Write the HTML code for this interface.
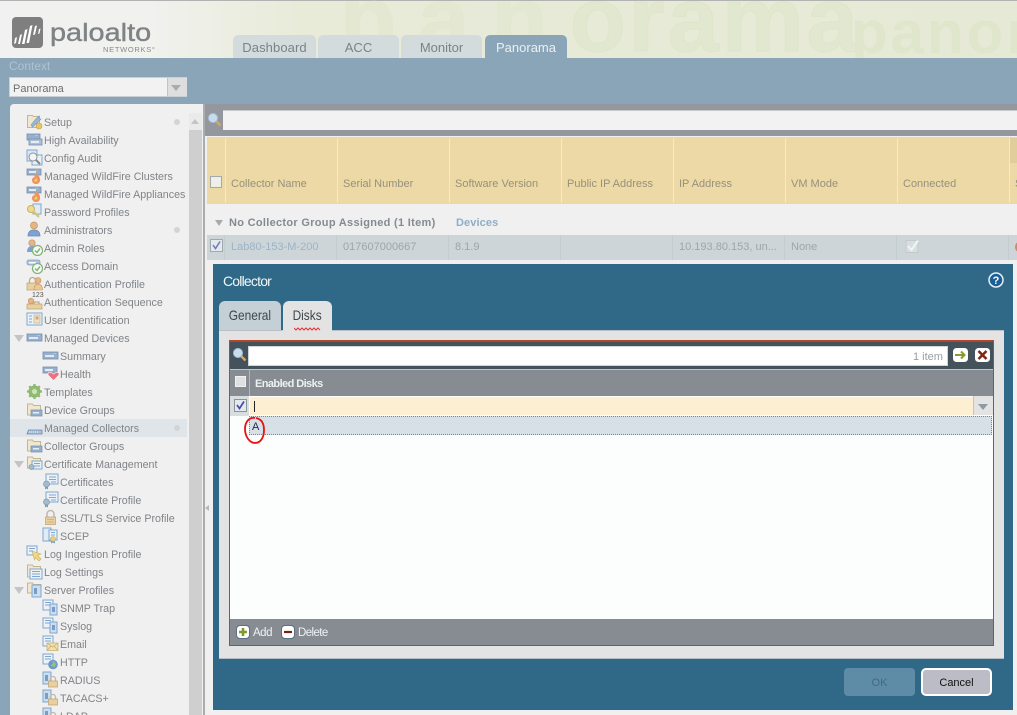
<!DOCTYPE html>
<html style="overflow:hidden;width:1017px;height:715px"><head><meta charset="utf-8"><title>Panorama</title>
<style>
html,body{margin:0;padding:0}
body{width:1017px;height:715px;overflow:hidden;position:relative;background:#f0f0f0;font-family:"Liberation Sans",sans-serif;font-size:11px}
#w{position:absolute;left:0;top:0;width:1017px;height:715px;overflow:hidden}
.a{position:absolute}
.t{position:absolute;white-space:nowrap;line-height:14px}
.tab{position:absolute;top:35px;height:23px;border-radius:5px 5px 0 0;background:#d3dbdc;color:#7d8285;font-size:13px;line-height:26px;text-align:center}
.s{position:absolute;left:44px;margin-top:1px;white-space:nowrap;color:#808488;font-size:10.7px;line-height:14px}
.l2{left:60px}
.i{position:absolute;width:17px;height:17px;left:26px;opacity:.68}
.i2{left:42px}
.tri{position:absolute;left:14px;width:0;height:0;border-left:5px solid transparent;border-right:5px solid transparent;border-top:7px solid #c4c4c4}
.dot{position:absolute;left:174px;width:6px;height:6px;border-radius:50%;background:#d4d4d4}
.h{position:absolute;top:178px;color:#96917d;font-size:11px;line-height:13px;white-space:nowrap}
.hs{position:absolute;top:138px;width:1px;height:65px;background:#f6e9c8}
.r{position:absolute;top:241px;color:#a0a5a7;font-size:11px;line-height:13px;white-space:nowrap}
.rs{position:absolute;top:236px;width:1px;height:24px;background:#c3cdd0}
.cx{display:inline-block;transform:scaleX(.85)}
</style></head>
<body><div id="w">
<svg width="0" height="0" style="position:absolute">
<defs>
<symbol id="dev" viewBox="0 0 17 17"><rect x="1" y="5" width="15" height="7" fill="#6d92bd" stroke="#3c5f8c" stroke-width=".8"/><rect x="3" y="8" width="9" height="2" fill="#dce7f3"/><rect x="11" y="6" width="3" height="1" fill="#7cd04e"/></symbol>
<symbol id="ha" viewBox="0 0 17 17"><rect x="1" y="3" width="13" height="6" fill="#6d92bd" stroke="#3c5f8c" stroke-width=".8"/><rect x="3" y="8" width="13" height="6" fill="#8aaad0" stroke="#3c5f8c" stroke-width=".8"/><rect x="5" y="10" width="8" height="2" fill="#e2ebf5"/><rect x="9" y="4" width="3" height="1" fill="#7cd04e"/></symbol>
<symbol id="setup" viewBox="0 0 17 17"><path d="M1.500 2.500h5l1 1h6v11h-12z" fill="#f2e4c0" stroke="#b59a5e"/><path d="M13 3 9 7 5 12l1.500 2L12 9l3-3-1 0-1-1z" fill="#6d9fd0" stroke="#3f6d9c" stroke-width=".6"/><circle cx="13" cy="13" r="3" fill="#e8b020" stroke="#a87a10" stroke-width=".6"/></symbol>
<symbol id="audit" viewBox="0 0 17 17"><rect x="1" y="1" width="10" height="11" fill="#cfe2f5" stroke="#4a86c0"/><rect x="6" y="6" width="10" height="10" fill="#e6f0fa" stroke="#4a86c0"/><circle cx="7" cy="8" r="4" fill="#f4f8fc" stroke="#666"/><path d="M10 11l4 4" stroke="#555" stroke-width="2"/></symbol>
<symbol id="wf" viewBox="0 0 17 17"><rect x="1" y="2" width="14" height="6" fill="#6d92bd" stroke="#3c5f8c" stroke-width=".8"/><rect x="3" y="4" width="7" height="2" fill="#e2ebf5"/><rect x="9" y="2.500" width="3" height="1" fill="#7cd04e"/><path d="M10 6c1 2 4 3 4 6a4 4 0 0 1-8 2c-.500-2 1-3 1.500-4 .5 1 1 1 1-.5 0-1.500.500-2.500 1.500-3.500z" fill="#ef6a1f"/><path d="M10 11c1 1 1.500 2 1 3.500H8.500C8 13 9.500 12.500 10 11z" fill="#f8c42a"/></symbol>
<symbol id="key" viewBox="0 0 17 17"><rect x="7" y="1" width="8" height="10" fill="#dbe9f7" stroke="#4a86c0"/><circle cx="5" cy="6" r="3.500" fill="#f0d060" stroke="#b8941e"/><path d="M7 8l6 6" stroke="#d8b030" stroke-width="2.400"/></symbol>
<symbol id="admin" viewBox="0 0 17 17"><circle cx="8" cy="4.500" r="3.500" fill="#e09a50" stroke="#a86a2c" stroke-width=".7"/><path d="M2 15c0-4 2-6 6-6s6 2 6 6z" fill="#4a7ec4" stroke="#2f5a94" stroke-width=".7"/></symbol>
<symbol id="roles" viewBox="0 0 17 17"><circle cx="6" cy="4" r="3.200" fill="#e09a50" stroke="#a86a2c" stroke-width=".7"/><path d="M1 13c0-4 2-6 5-6s5 2 5 6z" fill="#4a7ec4"/><circle cx="11.500" cy="11.500" r="5" fill="#fff" stroke="#4d9a3a" stroke-width="1.300"/><path d="M9 11.500l2 2 3-4" stroke="#4d9a3a" stroke-width="1.500" fill="none"/></symbol>
<symbol id="dom" viewBox="0 0 17 17"><rect x="1" y="3" width="13" height="5" rx="2" fill="#8fb4d8" stroke="#4a7ba8" stroke-width=".8"/><rect x="3" y="5" width="7" height="1.500" fill="#fff"/><circle cx="11.500" cy="11.500" r="5" fill="#fff" stroke="#4d9a3a" stroke-width="1.300"/><path d="M9 11.500l2 2 3-4" stroke="#4d9a3a" stroke-width="1.500" fill="none"/></symbol>
<symbol id="authp" viewBox="0 0 17 17"><path d="M3.500 8V5.500a3 3 0 0 1 6 0V8" fill="none" stroke="#b08a4a" stroke-width="1.300"/><rect x="1" y="8" width="10" height="7" fill="#e8c27a" stroke="#a07a3a" stroke-width=".7"/><circle cx="12" cy="5.500" r="3" fill="#e09a50" stroke="#a86a2c" stroke-width=".6"/><path d="M8 15c0-4 1.500-6 4-6s4.500 2 4.500 6z" fill="#eeb36c" stroke="#a86a2c" stroke-width=".6"/></symbol>
<symbol id="auths" viewBox="0 0 17 17"><circle cx="5" cy="8" r="2.800" fill="#e09a50" stroke="#a86a2c" stroke-width=".6"/><rect x="1" y="11" width="15" height="5" fill="#e8c27a" stroke="#a07a3a" stroke-width=".7"/><path d="M8 11V9h5v2" fill="none" stroke="#a07a3a"/></symbol>
<symbol id="uid" viewBox="0 0 17 17"><rect x="1" y="2" width="15" height="12" fill="#eef4fa" stroke="#4a86c0"/><path d="M3 5h3M3 8h3M3 11h3" stroke="#4a86c0"/><rect x="8" y="4" width="6" height="8" fill="#f0d9b0" stroke="#a08860" stroke-width=".6"/><circle cx="11" cy="7" r="1.700" fill="#c88a50"/></symbol>
<symbol id="health" viewBox="0 0 17 17"><rect x="1" y="2" width="14" height="6" fill="#6d92bd" stroke="#3c5f8c" stroke-width=".8"/><rect x="3" y="4" width="8" height="2" fill="#e2ebf5"/><path d="M11.500 15.500 6.500 10.500c-1.500-2 .5-4 2.500-3l2.500 1.500 2.500-1.500c2-1 4 1 2.500 3z" fill="#e8384e" stroke="#fff" stroke-width=".6"/></symbol>
<symbol id="tpl" viewBox="0 0 17 17"><circle cx="8.500" cy="8.500" r="5.500" fill="#7cb84c" stroke="#4e8a2a"/><path d="M8.500 1v15M1 8.500h15M3.200 3.200l10.600 10.600M13.800 3.200 3.200 13.800" stroke="#5f9e36" stroke-width="2.200"/><circle cx="8.500" cy="8.500" r="2.600" fill="#b9e08e"/></symbol>
<symbol id="fold" viewBox="0 0 17 17"><path d="M1.500 3h5l1 1.500h7V14h-13z" fill="#f2e4c0" stroke="#b59a5e"/><rect x="5" y="9" width="11" height="6" fill="#6d92bd" stroke="#3c5f8c" stroke-width=".7"/><rect x="7" y="11" width="6" height="1.500" fill="#e2ebf5"/></symbol>
<symbol id="coll" viewBox="0 0 17 17"><path d="M1 15 2.500 11H15l1 0v4z" fill="#8fb0d4" stroke="#3c5f8c" stroke-width=".8"/><path d="M3 13h10" stroke="#e2ebf5" stroke-dasharray="1 1" stroke-width="1.300"/></symbol>
<symbol id="cfold" viewBox="0 0 17 17"><path d="M1.500 2h5l1 1.500h7V13h-13z" fill="#f2e4c0" stroke="#b59a5e"/><rect x="6" y="6" width="10" height="8" fill="#e6f0fa" stroke="#4a86c0"/><path d="M8 8.500h6M8 11h6" stroke="#4a86c0"/><circle cx="5.500" cy="12" r="2.500" fill="#7fa3c0" stroke="#4a7390" stroke-width=".7"/></symbol>
<symbol id="cert" viewBox="0 0 17 17"><rect x="4" y="1" width="12" height="10" fill="#eaf2fa" stroke="#4a86c0"/><path d="M7 4h7M7 6.500h7M9 9h5" stroke="#4a86c0"/><circle cx="4.500" cy="11" r="3" fill="#7fa3c0" stroke="#4a7390" stroke-width=".7"/><path d="M3 13.500v3l1.500-1 1.500 1v-3" fill="#4a7390"/></symbol>
<symbol id="lock" viewBox="0 0 17 17"><path d="M5 8V5a3.500 3.500 0 0 1 7 0v3" fill="none" stroke="#a8a090" stroke-width="1.500"/><rect x="3.500" y="8" width="10" height="7.500" fill="#e8c27a" stroke="#a07a3a" stroke-width=".7"/><path d="M5 10.500h7M5 13h7" stroke="#c09a50"/></symbol>
<symbol id="scep" viewBox="0 0 17 17"><rect x="1" y="1" width="8" height="13" fill="#dbe9f7" stroke="#4a86c0"/><rect x="7" y="3" width="8" height="10" fill="#eef4fa" stroke="#4a86c0"/><path d="M9 5.500h4M9 8h4" stroke="#4a86c0"/><circle cx="11" cy="12" r="2.500" fill="#e8c040" stroke="#a88a20" stroke-width=".6"/><path d="M9 14.500v2l2-1 2 1v-2" fill="#3f78b8"/></symbol>
<symbol id="logi" viewBox="0 0 17 17"><rect x="1" y="1" width="10" height="9" fill="#eef4fa" stroke="#4a86c0"/><path d="M3 3.500h6M3 6h4" stroke="#4a86c0"/><path d="M6 6l9 3-3.500 1.500 3.500 3.500-2 2-3.500-3.500L8.500 15z" fill="#f0cc50" stroke="#b0901f" stroke-width=".6"/></symbol>
<symbol id="logs" viewBox="0 0 17 17"><path d="M1.500 2h5l1 1.500h7V14h-13z" fill="#f2e4c0" stroke="#b59a5e"/><rect x="4" y="6" width="12" height="10" fill="#eef4fa" stroke="#4a86c0"/><path d="M6 8.500h8M6 11h8M6 13.500h8" stroke="#4a86c0"/></symbol>
<symbol id="srvf" viewBox="0 0 17 17"><path d="M1.500 2h5l1 1.500h7V12h-13z" fill="#f2e4c0" stroke="#b59a5e"/><rect x="6" y="4" width="9" height="12" fill="#bcd5ec" stroke="#4a86c0"/><rect x="8" y="7" width="3" height="6" fill="#3f78b8"/></symbol>
<symbol id="srv" viewBox="0 0 17 17"><rect x="1" y="1" width="10" height="10" fill="#eef4fa" stroke="#4a86c0"/><path d="M3 3.500h6M3 6h6" stroke="#4a86c0"/><rect x="8" y="5" width="7" height="11" fill="#bcd5ec" stroke="#4a86c0"/><rect x="10" y="8" width="3" height="5" fill="#3f78b8"/></symbol>
<symbol id="mail" viewBox="0 0 17 17"><rect x="1" y="1" width="10" height="10" fill="#eef4fa" stroke="#4a86c0"/><path d="M3 3.500h6M3 6h6" stroke="#4a86c0"/><rect x="5" y="8" width="11" height="7.500" fill="#f2d890" stroke="#b0902f" stroke-width=".7"/><path d="M5 8l5.500 4L16 8M5 15.500l4-4.500M16 15.500l-4-4.500" stroke="#b0902f" stroke-width=".7" fill="none"/></symbol>
<symbol id="web" viewBox="0 0 17 17"><rect x="1" y="1" width="10" height="10" fill="#eef4fa" stroke="#4a86c0"/><path d="M3 3.500h6M3 6h6" stroke="#4a86c0"/><circle cx="11" cy="11.500" r="4.800" fill="#2f6fc0"/><path d="M8 9c2-1 3 0 3 1s-2 1-2 3l3 1c1-1 2-2 2-3-1-1-2-2-1-3" fill="#62b03c"/></symbol>
<symbol id="rad" viewBox="0 0 17 17"><rect x="1" y="1" width="8" height="12" fill="#bcd5ec" stroke="#4a86c0"/><rect x="3" y="4" width="3" height="6" fill="#3f78b8"/><path d="M8.500 10V8a2.500 2.500 0 0 1 5 0v2" fill="none" stroke="#a8a090" stroke-width="1.300"/><rect x="6.500" y="10" width="9" height="6" fill="#e8c27a" stroke="#a07a3a" stroke-width=".7"/></symbol>
</defs>
</svg>

<!-- header -->
<div class="a" style="left:0;top:0;width:1017px;height:58px;overflow:hidden;background:linear-gradient(90deg,#f1f1f1 0,#f1f1ee 150px,#e8ebd8 300px,#e5e9d6 1017px)">
 <div class="a" style="left:0;top:0;width:1017px;height:1px;background:#b2b2b2"></div>
 <div class="t" style="left:340px;top:-26px;font-size:92px;line-height:92px;font-weight:bold;color:#e2e7cf;letter-spacing:3px;-webkit-text-stroke:1px #dfe6c8"><span style="letter-spacing:22px;opacity:.6">pan</span>orama</div>
 <div class="t" style="left:851px;top:3px;font-size:60px;line-height:60px;font-weight:bold;color:#e0e6cc;letter-spacing:3px">panor</div>
</div>
<svg class="a" style="left:12px;top:17px" width="31" height="31" viewBox="0 0 31 31"><rect width="31" height="31" rx="4" fill="#7f7f7f"/><path d="M3 21l2-1-1 6-2 1zM8 18l2-1-2 10h-2zM13 13l2.500-1-3 15h-2.500zM18 9l2.500-1-3.500 18h-2.500zM23 9l2-.500-2 9-2 .5zM27 12l1.500-.500-1 5-1.500.500z" fill="#fff"/></svg>
<div class="t" style="left:50px;top:19px;font-size:25px;line-height:28px;color:#7f8386;transform:scaleX(1.155);transform-origin:0 0;-webkit-text-stroke:.4px #7f8386">paloalto</div>
<div class="t" style="left:103px;top:45px;font-size:7.500px;line-height:10px;color:#8a8a8a;letter-spacing:.7px">NETWORKS°</div>
<div class="tab" style="left:233px;width:83px;letter-spacing:.1px">Dashboard</div>
<div class="tab" style="left:318px;width:81px;">ACC</div>
<div class="tab" style="left:401px;width:81px;">Monitor</div>
<div class="tab" style="left:485px;width:82px;background:#8aa5b8;color:#eaf0f4">Panorama</div>

<!-- blue band -->
<div class="a" style="left:0;top:58px;width:1017px;height:657px;background:#8aa5b8"></div>
<div class="t" style="left:9px;top:59px;color:#aec3d0;font-size:12px">Context</div>
<div class="a" style="left:9px;top:77px;width:176px;height:18px;background:#f2f2f2;border:1px solid #c9cfd3"></div>
<div class="t" style="left:13px;top:82px;color:#6d6d6d;font-size:11px">Panorama</div>
<div class="a" style="left:167px;top:78px;width:19px;height:18px;background:#dedede;border-left:1px solid #c4c4c4"></div>
<div class="a" style="left:171px;top:85px;width:0;height:0;border-left:5px solid transparent;border-right:5px solid transparent;border-top:6px solid #a6adb2"></div>

<!-- sidebar -->
<div class="a" style="left:10px;top:104px;width:194px;height:611px;background:#f0f0f0;border-radius:4px 0 0 0"></div>
<div class="a" style="left:189px;top:113px;width:13px;height:602px;background:#cfcfcf"></div>
<div class="a" style="left:189px;top:113px;width:13px;height:17px;background:#eaeaea"></div>
<div class="a" style="left:191px;top:119px;width:0;height:0;border-left:4px solid transparent;border-right:4px solid transparent;border-bottom:5px solid #c4c4c4"></div>
<div class="a" style="left:10px;top:419px;width:177px;height:18px;background:#dfe5e9"></div>
<div class="a" style="left:203px;top:104px;width:2px;height:611px;background:#a9adb0"></div>
<div class="a" style="left:205px;top:104px;width:812px;height:611px;background:#f0f0f0"></div>

<svg class="i" style="top:113px"><use href="#setup"/></svg><div class="s" style="top:115px">Setup</div><div class="dot" style="top:119px"></div>
<svg class="i" style="top:131px"><use href="#ha"/></svg><div class="s" style="top:133px">High Availability</div>
<svg class="i" style="top:149px"><use href="#audit"/></svg><div class="s" style="top:151px">Config Audit</div>
<svg class="i" style="top:167px"><use href="#wf"/></svg><div class="s" style="top:169px">Managed WildFire Clusters</div>
<svg class="i" style="top:185px"><use href="#wf"/></svg><div class="s" style="top:187px">Managed WildFire Appliances</div>
<svg class="i" style="top:203px"><use href="#key"/></svg><div class="s" style="top:205px">Password Profiles</div>
<svg class="i" style="top:221px"><use href="#admin"/></svg><div class="s" style="top:223px">Administrators</div><div class="dot" style="top:227px"></div>
<svg class="i" style="top:239px"><use href="#roles"/></svg><div class="s" style="top:241px">Admin Roles</div>
<svg class="i" style="top:257px"><use href="#dom"/></svg><div class="s" style="top:259px">Access Domain</div>
<svg class="i" style="top:275px"><use href="#authp"/></svg><div class="s" style="top:277px">Authentication Profile</div>
<svg class="i" style="top:293px"><use href="#auths"/></svg><div class="t" style="left:32px;top:291px;font-size:7px;line-height:9px;color:#555">123</div><div class="s" style="top:295px">Authentication Sequence</div>
<svg class="i" style="top:311px"><use href="#uid"/></svg><div class="s" style="top:313px">User Identification</div>
<div class="tri" style="top:335px"></div><svg class="i" style="top:329px"><use href="#dev"/></svg><div class="s" style="top:331px">Managed Devices</div>
<svg class="i i2" style="top:347px"><use href="#dev"/></svg><div class="s l2" style="top:349px">Summary</div>
<svg class="i i2" style="top:365px"><use href="#health"/></svg><div class="s l2" style="top:367px">Health</div>
<svg class="i" style="top:383px"><use href="#tpl"/></svg><div class="s" style="top:385px">Templates</div>
<svg class="i" style="top:401px"><use href="#fold"/></svg><div class="s" style="top:403px">Device Groups</div>
<svg class="i" style="top:419px"><use href="#coll"/></svg><div class="s" style="top:421px">Managed Collectors</div><div class="dot" style="top:425px"></div>
<svg class="i" style="top:437px"><use href="#fold"/></svg><div class="s" style="top:439px">Collector Groups</div>
<div class="tri" style="top:461px"></div><svg class="i" style="top:455px"><use href="#cfold"/></svg><div class="s" style="top:457px">Certificate Management</div>
<svg class="i i2" style="top:473px"><use href="#cert"/></svg><div class="s l2" style="top:475px">Certificates</div>
<svg class="i i2" style="top:491px"><use href="#cert"/></svg><div class="s l2" style="top:493px">Certificate Profile</div>
<svg class="i i2" style="top:509px"><use href="#lock"/></svg><div class="s l2" style="top:511px">SSL/TLS Service Profile</div>
<svg class="i i2" style="top:527px"><use href="#scep"/></svg><div class="s l2" style="top:529px">SCEP</div>
<svg class="i" style="top:545px"><use href="#logi"/></svg><div class="s" style="top:547px">Log Ingestion Profile</div>
<svg class="i" style="top:563px"><use href="#logs"/></svg><div class="s" style="top:565px">Log Settings</div>
<div class="tri" style="top:587px"></div><svg class="i" style="top:581px"><use href="#srvf"/></svg><div class="s" style="top:583px">Server Profiles</div>
<svg class="i i2" style="top:599px"><use href="#srv"/></svg><div class="s l2" style="top:601px">SNMP Trap</div>
<svg class="i i2" style="top:617px"><use href="#srv"/></svg><div class="s l2" style="top:619px">Syslog</div>
<svg class="i i2" style="top:635px"><use href="#mail"/></svg><div class="s l2" style="top:637px">Email</div>
<svg class="i i2" style="top:653px"><use href="#web"/></svg><div class="s l2" style="top:655px">HTTP</div>
<svg class="i i2" style="top:671px"><use href="#rad"/></svg><div class="s l2" style="top:673px">RADIUS</div>
<svg class="i i2" style="top:689px"><use href="#rad"/></svg><div class="s l2" style="top:691px">TACACS+</div>
<svg class="i i2" style="top:707px"><use href="#rad"/></svg><div class="s l2" style="top:709px">LDAP</div>
<div class="a" style="left:205px;top:505px;width:0;height:0;border-top:3px solid transparent;border-bottom:3px solid transparent;border-right:4px solid #b8b8b8"></div>

<!-- search bar -->
<div class="a" style="left:205px;top:104px;width:812px;height:32px;background:#94989e"></div>
<div class="a" style="left:223px;top:110px;width:794px;height:19px;background:#f2f2f2;border-top:1px solid #c8c8c8"></div>
<svg class="a" style="left:207px;top:112px" width="15" height="15" viewBox="0 0 15 15"><path d="M9 9l4.500 4.500" stroke="#d0a868" stroke-width="2.400"/><circle cx="6" cy="6" r="4.500" fill="#c7dcef" stroke="#a8c0d4"/></svg>

<!-- table header -->
<div class="a" style="left:207px;top:137px;width:810px;height:67px;background:#edd9a5"></div>
<div class="a" style="left:1010px;top:138px;width:7px;height:25px;background:#e0cd9c"></div>
<div class="hs" style="left:225px"></div><div class="hs" style="left:337px"></div><div class="hs" style="left:449px"></div><div class="hs" style="left:561px"></div><div class="hs" style="left:673px"></div><div class="hs" style="left:785px"></div><div class="hs" style="left:897px"></div><div class="hs" style="left:1009px"></div>
<div class="a" style="left:210px;top:176px;width:10px;height:10px;background:#efefe9;border:1.500px solid #a3a8ad"></div>
<div class="h" style="left:231px">Collector Name</div>
<div class="h" style="left:343px">Serial Number</div>
<div class="h" style="left:455px">Software Version</div>
<div class="h" style="left:567px">Public IP Address</div>
<div class="h" style="left:679px">IP Address</div>
<div class="h" style="left:791px">VM Mode</div>
<div class="h" style="left:903px">Connected</div>
<div class="h" style="left:1015px">S</div>

<!-- group row -->
<div class="a" style="left:215px;top:220px;width:0;height:0;border-left:4px solid transparent;border-right:4px solid transparent;border-top:6px solid #a9a9a9"></div>
<div class="t" style="left:229px;top:216px;font-weight:bold;color:#858a90;letter-spacing:.3px">No Collector Group Assigned (1 Item)</div>
<div class="t" style="left:456px;top:216px;font-weight:bold;color:#8eaec6;letter-spacing:.1px">Devices</div>

<!-- data row -->
<div class="a" style="left:207px;top:235px;width:810px;height:25px;background:#cdd5d8"></div>
<div class="rs" style="left:224px"></div><div class="rs" style="left:336px"></div><div class="rs" style="left:448px"></div><div class="rs" style="left:560px"></div><div class="rs" style="left:672px"></div><div class="rs" style="left:784px"></div><div class="rs" style="left:896px"></div><div class="rs" style="left:1008px"></div>
<svg class="a" style="left:210px;top:239px" width="13" height="13" viewBox="0 0 13 13"><rect x=".5" y=".5" width="12" height="12" fill="#e5e8ed" stroke="#a3a8ad"/><path d="M3 6l2.500 3.500L10 2.500" stroke="#6f7ab8" stroke-width="1.500" fill="none"/></svg>
<div class="r" style="left:231px;color:#9ab4c8">Lab80-153-M-200</div>
<div class="r" style="left:343px">017607000667</div>
<div class="r" style="left:455px">8.1.9</div>
<div class="r" style="left:679px">10.193.80.153, un...</div>
<div class="r" style="left:791px">None</div>
<svg class="a" style="left:905px;top:239px" width="15" height="15" viewBox="0 0 15 15"><rect x="1" y="1.500" width="12" height="12" fill="#d8dee0" stroke="#c2cacd"/><path d="M3 7l3.500 4L13 1.500" stroke="#f1f4f5" stroke-width="2" fill="none"/></svg>
<div class="a" style="left:1015px;top:242px;width:8px;height:10px;border-radius:50%;background:#c98a70"></div>

<!-- dialog -->
<div class="a" style="left:213px;top:264px;width:800px;height:446px;background:#306987"></div>
<div class="t" style="left:223px;top:273px;color:#f2f6f8;font-size:14px;line-height:16px;letter-spacing:-.8px">Collector</div>
<svg class="a" style="left:988px;top:272px" width="16" height="16" viewBox="0 0 16 16"><circle cx="8" cy="8" r="7" fill="#1b5f97" stroke="#e8f0f5" stroke-width="1.500"/><text x="8" y="12" text-anchor="middle" font-size="11" font-weight="bold" font-family="Liberation Sans" fill="#fff">?</text></svg>

<div class="a" style="left:219px;top:330px;width:785px;height:327px;background:#e3e3e3;border-bottom:1px solid #b3bcc2;border-top:1px solid #b9c0c5"></div>
<div class="a" style="left:219px;top:301px;width:62px;height:29px;background:#c4d0d5;border-radius:6px 6px 0 0;color:#3f474d;font-size:14px;line-height:29px;text-align:center"><span class="cx">General</span></div>
<div class="a" style="left:283px;top:301px;width:49px;height:31px;background:#e3e3e3;border-radius:6px 6px 0 0;color:#3f474d;font-size:14px;line-height:29px;text-align:center"><span class="cx">Disks</span></div>
<svg class="a" style="left:294px;top:327px" width="28" height="4" viewBox="0 0 28 4"><path d="M0 1l2 2 2-2 2 2 2-2 2 2 2-2 2 2 2-2 2 2 2-2 2 2 2-2 2 2" stroke="#e43030" stroke-width="1" fill="none"/></svg>

<div class="a" style="left:229px;top:340px;width:763px;height:303px;background:#fcfdfd;border:1px solid #b8452a;border-top-width:2px"></div>
<div class="a" style="left:230px;top:342px;width:763px;height:27px;background:#44525c"></div>
<div class="a" style="left:248px;top:346px;width:698px;height:18px;background:#fff;border:1px solid #cfd4d8"></div>
<div class="t" style="left:913px;top:350px;color:#9a9ea2;font-size:11px">1 item</div>
<svg class="a" style="left:232px;top:347px" width="15" height="15" viewBox="0 0 15 15"><path d="M9 9l4.500 4.500" stroke="#d0a868" stroke-width="2.400"/><circle cx="6" cy="6" r="4.500" fill="#c7dcef" stroke="#a8c0d4"/></svg>
<svg class="a" style="left:953px;top:348px" width="15" height="14" viewBox="0 0 15 14"><rect width="15" height="14" rx="3.500" fill="#fff"/><path d="M2 7h9M8 3.500 11.500 7 8 10.500" stroke="#8a9a2c" stroke-width="2" fill="none"/></svg>
<svg class="a" style="left:975px;top:348px" width="15" height="14" viewBox="0 0 15 14"><rect width="15" height="14" rx="3.500" fill="#fff"/><path d="M3.500 3 11.500 11M11.500 3 3.500 11" stroke="#7c2a12" stroke-width="2.600"/></svg>

<div class="a" style="left:230px;top:369px;width:763px;height:27px;background:#868c92;border-top:1px solid #c2c6c9;box-sizing:border-box"></div>
<div class="a" style="left:249px;top:370px;width:1px;height:26px;background:#b3b7bb"></div>
<div class="a" style="left:235px;top:376px;width:9px;height:9px;background:#dfe0e2;border:1px solid #f1f1f1"></div>
<div class="t" style="left:255px;top:377px;color:#eef0f2;font-size:11px;font-weight:bold;letter-spacing:-.58px">Enabled Disks</div>

<div class="a" style="left:230px;top:396px;width:19px;height:20px;background:#d8dde0"></div>
<svg class="a" style="left:234px;top:399px" width="13" height="13" viewBox="0 0 13 13"><rect x=".5" y=".5" width="12" height="12" fill="#e5e8ed" stroke="#8c9298"/><path d="M3 6l2.500 3.500L10 2.500" stroke="#3f4db0" stroke-width="1.700" fill="none"/></svg>
<div class="a" style="left:250px;top:397px;width:724px;height:18px;background:#fdf0d2"></div>
<div class="a" style="left:254px;top:401px;width:1px;height:11px;background:#222"></div>
<div class="a" style="left:973px;top:396px;width:20px;height:19px;background:#e3e3e3;border-left:1px solid #c4c4c4;box-sizing:border-box"></div>
<div class="a" style="left:978px;top:404px;width:0;height:0;border-left:5px solid transparent;border-right:5px solid transparent;border-top:6px solid #8f9aa3"></div>

<div class="a" style="left:249px;top:416px;width:743px;height:19px;background:#d6e0e6;border:1px dotted #80868a;box-sizing:border-box"></div>
<div class="t" style="left:252px;top:420px;color:#1f2a4a;font-size:11px">A</div>
<svg class="a" style="left:243px;top:416px" width="24" height="29" viewBox="0 0 24 29"><path d="M12 2C6 1 2 6 2 13c0 8 5 14 10 14 6 0 9-6 9-13 0-7-3-11-8-12" fill="none" stroke="#ea1010" stroke-width="1.800"/></svg>

<div class="a" style="left:230px;top:619px;width:763px;height:26px;background:#868c92"></div>
<svg class="a" style="left:236px;top:625px" width="14" height="14" viewBox="0 0 14 14"><rect x=".5" y=".5" width="13" height="13" rx="3.500" fill="#fff" stroke="#5f7080"/><path d="M7 3v8M3 7h8" stroke="#7f9a2c" stroke-width="2.600"/></svg>
<div class="t" style="left:253px;top:626px;color:#eef2f5;font-size:11.500px;letter-spacing:-.5px">Add</div>
<svg class="a" style="left:281px;top:625px" width="14" height="14" viewBox="0 0 14 14"><rect x=".5" y=".5" width="13" height="13" rx="3.500" fill="#fff" stroke="#5f7080"/><path d="M3 7h8" stroke="#7c1f0e" stroke-width="2.200"/></svg>
<div class="t" style="left:298px;top:626px;color:#eef2f5;font-size:11.500px;letter-spacing:-.6px">Delete</div>

<div class="a" style="left:844px;top:668px;width:71px;height:28px;background:#5e8ba6;border-radius:4px;color:#486a82;font-size:11px;line-height:31px;text-align:center">OK</div>
<div class="a" style="left:921px;top:668px;width:67px;height:24px;background:#bbbcc5;border:2px solid #fff;border-radius:5px;color:#111;font-size:11px;line-height:27px;text-align:center">Cancel</div>
</div></body></html>
